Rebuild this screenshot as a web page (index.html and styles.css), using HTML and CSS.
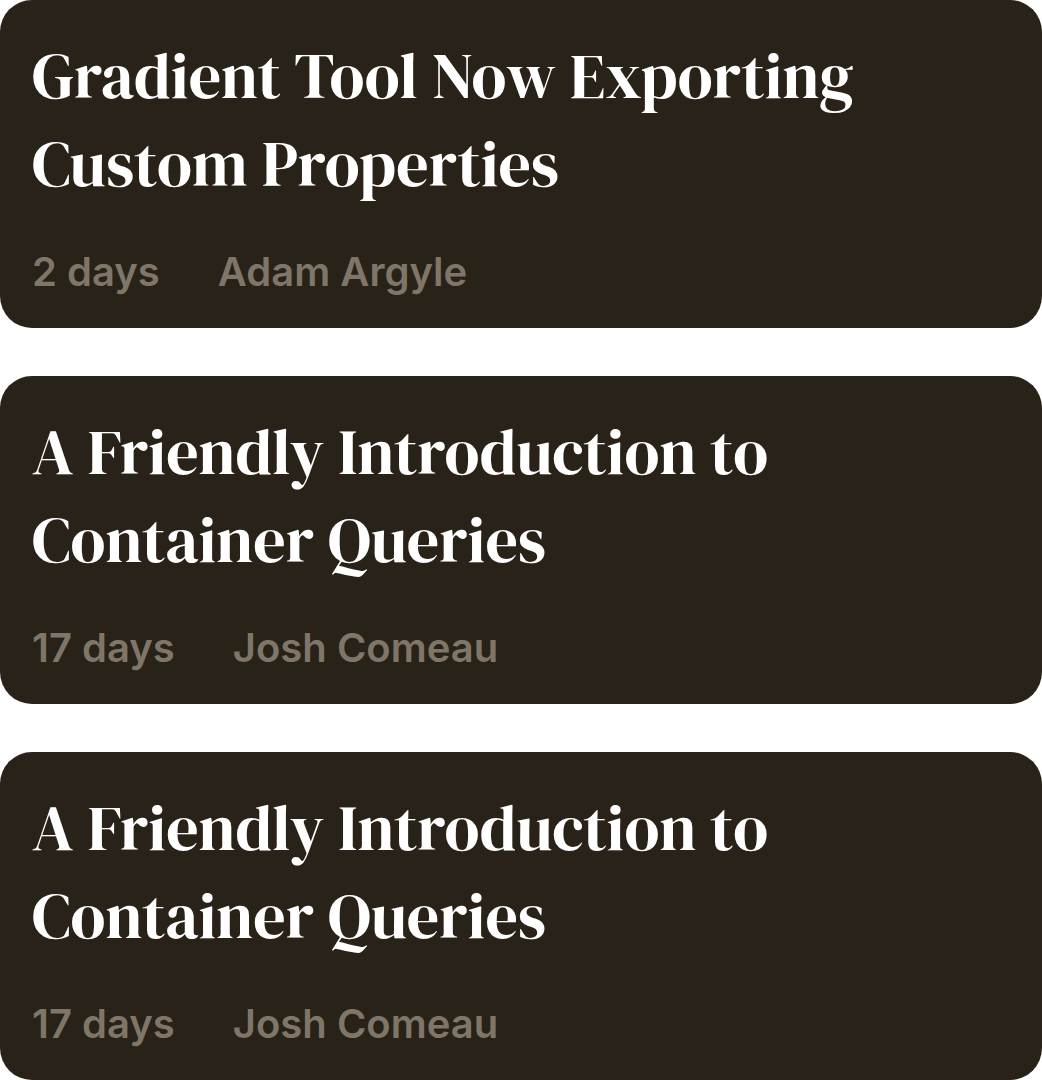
FILE: index.html
```html
<!DOCTYPE html>
<html lang="en">
<head>
<meta charset="utf-8">
<title>Articles</title>
<link rel="stylesheet" href="styles.css">
</head>
<body>
<main class="feed">
  <article class="card">
    <h2 class="card-title">Gradient Tool Now Exporting Custom Properties</h2>
    <p class="card-meta"><span>2 days</span><span>Adam Argyle</span></p>
  </article>
  <article class="card">
    <h2 class="card-title">A Friendly Introduction to Container Queries</h2>
    <p class="card-meta"><span>17 days</span><span>Josh Comeau</span></p>
  </article>
  <article class="card">
    <h2 class="card-title">A Friendly Introduction to Container Queries</h2>
    <p class="card-meta"><span>17 days</span><span>Josh Comeau</span></p>
  </article>
</main>
</body>
</html>
```
FILE: styles.css
```css
body {
  margin: 0;
  background: #fff;
}

.feed {
  display: flex;
  flex-direction: column;
  gap: 48px;
}

.card {
  padding: 32px;
  border-radius: 32px;
  background: #292218;
}

.card-title {
  max-width: 880px;
  margin: 0;
  color: #fff;
  font: 400 64px/88px "DM Serif Display", "DM Serif Text", "Liberation Serif", serif;
}

.card-meta {
  display: flex;
  gap: 58px;
  margin: 40px 0 0;
  color: #7f7669;
  font: 600 40px/48px Inter, sans-serif;
}
```
